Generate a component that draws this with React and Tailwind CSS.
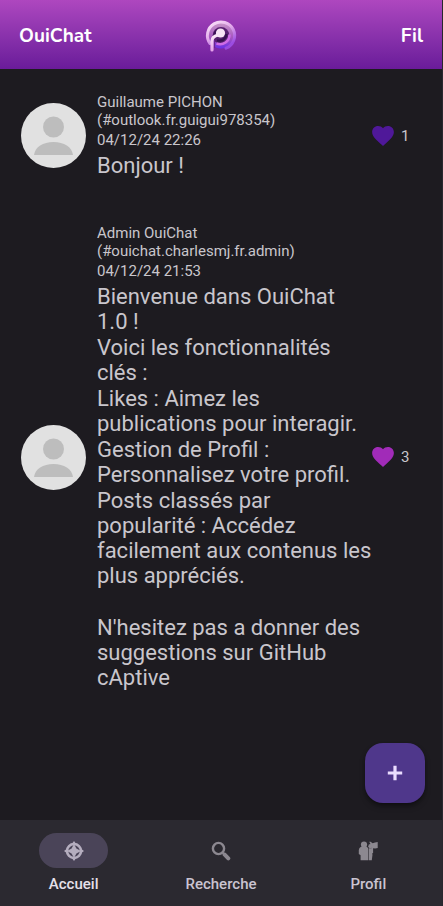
import { useState } from 'react';

const posts = [
  {
    id: 1,
    author: 'Guillaume PICHON',
    handle: '(#outlook.fr.guigui978354)',
    date: '04/12/24 22:26',
    lines: ['Bonjour !'],
    likes: 1,
    heartClass: 'text-[#4f1899]',
  },
  {
    id: 2,
    author: 'Admin OuiChat',
    handle: '(#ouichat.charlesmj.fr.admin)',
    date: '04/12/24 21:53',
    lines: [
      'Bienvenue dans OuiChat 1.0\u00a0!',
      'Voici les fonctionnalités clés :',
      'Likes : Aimez les publications pour interagir.',
      'Gestion de Profil : Personnalisez votre profil.',
      'Posts classés par popularité : Accédez facilement aux contenus les plus appréciés.',
      '',
      "N'hesitez pas a donner des suggestions sur GitHub cAptive",
    ],
    likes: 3,
    heartClass: 'text-[#a12bb8]',
  },
];

const Logo = () => (
  <svg viewBox="0 0 34 36" className="w-[34px] h-9" fill="none" aria-hidden="true">
    <defs>
      <linearGradient id="ring" x1="0" y1="0" x2="0.6" y2="1">
        <stop offset="0" stopColor="#fdeafb" />
        <stop offset="0.5" stopColor="#e2a8ea" />
        <stop offset="1" stopColor="#9a4be0" />
      </linearGradient>
      <linearGradient id="band" x1="0" y1="0" x2="0" y2="1">
        <stop offset="0" stopColor="#c99ac9" />
        <stop offset="0.6" stopColor="#a452c0" />
        <stop offset="1" stopColor="#6a2fe8" />
      </linearGradient>
      <linearGradient id="stem" x1="0" y1="0" x2="0" y2="1">
        <stop offset="0" stopColor="#fbeaf8" />
        <stop offset="1" stopColor="#e6a3ea" />
      </linearGradient>
    </defs>
    <circle cx="17" cy="17.500" r="13" fill="url(#band)" />
    <path d="M6 25.500A13.600 13.600 0 1 1 22 30.200" stroke="url(#ring)" strokeWidth="3" strokeLinecap="round" />
    <circle cx="17" cy="17.500" r="8.400" fill="#57206f" />
    <path d="M10.500 18a6.800 6.800 0 0 1 2.500-6" stroke="#3d1257" strokeWidth="2" />
    <path d="M12.500 25.500q5 1.800 9-1t4-8" stroke="#cf6be6" strokeWidth="2.600" />
    <path d="M13 22.300q4.500 1 7-1.300t2.500-5" stroke="#35104f" strokeWidth="2.400" />
    <path d="M10.300 22v8" stroke="#6b2390" strokeWidth="1.600" />
    <path d="M8 32V23q0-4.500 6-6" stroke="url(#stem)" strokeWidth="3.200" strokeLinecap="round" />
    <circle cx="16.500" cy="15" r="4.600" fill="#f6e3f4" />
  </svg>
);

const Avatar = () => (
  <svg viewBox="0 0 65 65" className="w-[65px] h-[65px] shrink-0" aria-hidden="true">
    <circle cx="32.500" cy="32.500" r="32.500" fill="#e1e1e1" />
    <circle cx="32.500" cy="24" r="10.500" fill="#bdbdbd" />
    <path d="M13 52c1-8 9-13 19.500-13S51 44 52 52z" fill="#bdbdbd" />
  </svg>
);

const Heart = () => (
  <svg viewBox="2 3 20 18.400" className="w-[22px] h-5" fill="currentColor" aria-hidden="true">
    <path d="M12 21.350l-1.450-1.320C5.400 15.360 2 12.280 2 8.500 2 5.420 4.420 3 7.500 3c1.740 0 3.410.81 4.500 2.090C13.090 3.810 14.760 3 16.500 3 19.580 3 22 5.420 22 8.500c0 3.780-3.400 6.860-8.550 11.540z" />
  </svg>
);

const CompassIcon = () => (
  <svg viewBox="0 0 20 20" className="w-5 h-5" fill="none" stroke="currentColor" aria-hidden="true">
    <circle cx="10" cy="10" r="7" strokeWidth="2.600" />
    <path d="M10 0l2.200 3H7.800zM10 20l2.200-3H7.800zM0 10l3-2.200v4.400zM20 10l-3-2.200v4.400z" fill="currentColor" stroke="none" />
    <path d="M10 3l2.400 4.600L17 10l-4.600 2.400L10 17l-2.400-4.600L3 10l4.600-2.400z" fill="currentColor" stroke="none" />
  </svg>
);

const SearchIcon = () => (
  <svg viewBox="0 0 20 20" className="w-5 h-5" fill="none" stroke="currentColor" aria-hidden="true">
    <circle cx="7.500" cy="7.500" r="5.600" strokeWidth="2.400" />
    <path d="M11.500 11.500l2 2" strokeWidth="2.400" />
    <path d="M13.700 13.700l3.600 3.600" strokeWidth="4" strokeLinecap="round" />
  </svg>
);

const PeopleIcon = () => (
  <svg viewBox="0 0 20 20" className="w-5 h-5" fill="currentColor" aria-hidden="true">
    <circle cx="6" cy="3.600" r="3.100" />
    <path d="M3.400 5.500h5.200l1.800 2v11.700H2.600v-5L.8 13V9q0-2.500 2.600-3.500z" />
    <path d="M11 7.200h3.400v7l-.6 5H11z" />
    <circle cx="12.400" cy="5.200" r="2.100" />
    <path d="M11.200.8h1.400l2 1.500 2.400-.8 2.700-.6v6l-2.600.6-2-.3V12h-1.600V5z" />
  </svg>
);

const tabs = [
  { id: 'home', label: 'Accueil', Icon: CompassIcon },
  { id: 'search', label: 'Recherche', Icon: SearchIcon },
  { id: 'profile', label: 'Profil', Icon: PeopleIcon },
];

const Post = ({ post }) => {
  const [liked, setLiked] = useState(false);

  return (
    <article className="flex items-center">
      <Avatar />
      <div className="ml-[11px] flex-1 min-w-0 text-[#c9c6cc]">
        <div className="text-[15px] leading-[18px]">
          <h2>{post.author}</h2>
          <p>{post.handle}</p>
        </div>
        <p className="mt-0.5 text-[15px] leading-[18px]">{post.date}</p>
        <div className="mt-1 space-y-px text-[22px] leading-[25px]">
          {post.lines.map((line, i) => (
            <p key={i} className="min-h-[25px]">{line}</p>
          ))}
        </div>
      </div>
      <button
        type="button"
        aria-label="J'aime"
        aria-pressed={liked}
        onClick={() => setLiked(!liked)}
        className={post.heartClass}
      >
        <Heart />
      </button>
      <span className="ml-[7px] w-[9px] text-[15px] leading-[18px] text-[#c9c6cc]">
        {post.likes + (liked ? 1 : 0)}
      </span>
    </article>
  );
};

export default function App() {
  const [activeTab, setActiveTab] = useState('home');

  return (
    <div className="flex flex-col min-h-screen bg-[#1d1b20] border-r border-[#29272e] font-['Roboto',sans-serif]">
      <header className="grid grid-cols-3 items-center h-[69px] px-[19px] pt-[3px] bg-linear-to-b from-[#ae47bf] to-[#6a1b9a] text-white font-['Nunito','Open_Sans',sans-serif] text-[19px] font-bold">
        <h1>OuiChat</h1>
        <div className="justify-self-center">
          <Logo />
        </div>
        <span className="justify-self-end">Fil</span>
      </header>

      <main className="relative flex-1 pt-6 pl-[21px] pr-8">
        <div className="flex flex-col gap-[46px]">
          {posts.map((post) => (
            <Post key={post.id} post={post} />
          ))}
        </div>
        <button
          type="button"
          aria-label="Nouveau post"
          className="absolute right-[17px] bottom-[17px] flex items-center justify-center w-[60px] h-[60px] rounded-[18px] bg-[#4f378b] text-[#eaddff] shadow-md shadow-black/40"
        >
          <svg viewBox="0 0 16 16" className="w-4 h-4" stroke="currentColor" strokeWidth="3.200" strokeLinejoin="round" aria-hidden="true">
            <path d="M8 .8v14.400M.8 8h14.400" />
          </svg>
        </button>
      </main>

      <nav className="flex h-[86px] pt-[13px] bg-[#2b2930]">
        {tabs.map(({ id, label, Icon }) => {
          const active = id === activeTab;
          return (
            <button
              key={id}
              type="button"
              onClick={() => setActiveTab(id)}
              className={`flex-1 flex flex-col items-center gap-[7px] text-[15px] leading-[18px] font-medium ${active ? 'text-[#e6e0e9]' : 'text-[#cac4d0]'}`}
            >
              <span
                className={`flex items-center justify-center w-[69px] h-[35px] rounded-full ${active ? 'bg-[#4a4458] text-[#b5aebf]' : 'text-[#8c8890]'}`}
              >
                <Icon />
              </span>
              {label}
            </button>
          );
        })}
      </nav>
    </div>
  );
}
